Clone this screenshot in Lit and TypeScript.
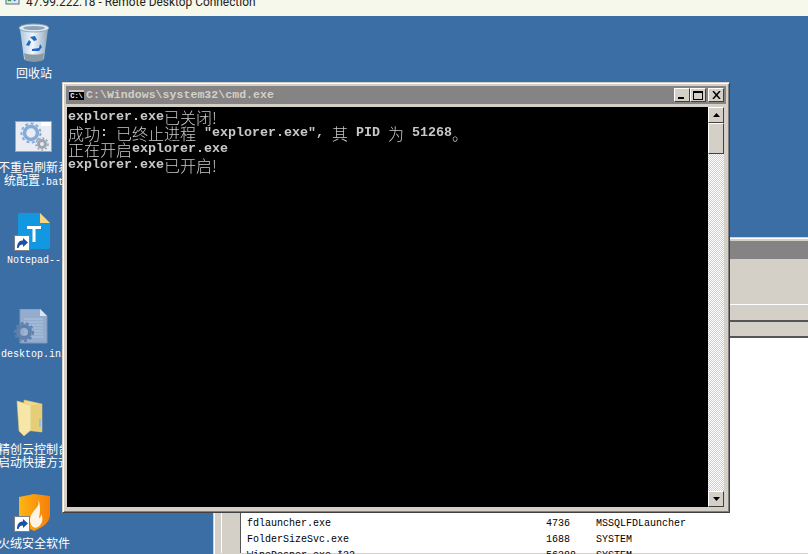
import { LitElement, html, css, svg } from "lit";
import { customElement } from "lit/decorators.js";

const shortcut = html`<svg class="sc" width="16" height="16" viewBox="0 0 16 16">
  <rect x=".5" y=".5" width="15" height="15" fill="#fff" stroke="#7a7f88"/>
  <path d="M3 13c0-5 2-7.500 6-7.500V3l5 4.500-5 4.500V9.500c-2.500 0-4 1-4.500 3.500z" fill="#1c4fa8"/>
</svg>`;

const recycle = svg`<svg width="36" height="42" viewBox="0 0 36 42">
  <defs><linearGradient id="b" x1="0" x2="1"><stop offset="0" stop-color="#a9c6dc"/><stop offset=".45" stop-color="#f1f6fa"/><stop offset="1" stop-color="#8fa9bd"/></linearGradient></defs>
  <path d="M4 7l4 30c2 3 18 3 20 0l4-30z" fill="url(#b)"/>
  <path d="M8 31c5 2 15 2 20 0l-1 7c-3 2-15 2-18 0z" fill="#8c9aa6"/>
  <ellipse cx="18" cy="6" rx="15" ry="4" fill="#dfeaf2" stroke="#8fa6b8"/>
  <ellipse cx="18" cy="6" rx="11" ry="2" fill="#8aa4b8"/>
  <path d="M14 15l5-1 2 4-3 1zM10 23l3-5 2 2-2 4zM16 27l7-1 1-4 2 3-3 4h-7z" fill="#1f66c8"/>
</svg>`;

const gear = svg`<svg width="38" height="32" viewBox="0 0 38 32">
  <rect x=".5" y=".5" width="36" height="30" fill="#e9edf3" stroke="#9aa6b8"/>
  <rect x="26" y="1" width="10" height="4" fill="#ffffff"/>
  <circle cx="16" cy="12" r="6.500" fill="none" stroke="#86abd8" stroke-width="3.500"/>
  <circle cx="16" cy="12" r="9.500" fill="none" stroke="#86abd8" stroke-width="2" stroke-dasharray="3 2.500"/>
  <circle cx="27" cy="23" r="3.500" fill="none" stroke="#9aa6b4" stroke-width="3"/>
  <circle cx="27" cy="23" r="6" fill="none" stroke="#9aa6b4" stroke-width="1.500" stroke-dasharray="2 2"/>
</svg>`;

const note = svg`<svg width="32" height="36" viewBox="0 0 32 36">
  <path d="M2 0h20l10 10v24a2 2 0 0 1-2 2H2a2 2 0 0 1-2-2V2a2 2 0 0 1 2-2z" fill="#1298e0"/>
  <path d="M22 0l10 10H22z" fill="#f8d57e"/>
  <path d="M9 13h14v3h-5.500v13h-3V16H9z" fill="#fff"/>
</svg>`;

const ini = svg`<svg width="34" height="37" viewBox="0 0 34 37">
  <path d="M6 0h20l7 7v27H6z" fill="#94acce" stroke="#7f97ba"/>
  <path d="M26 0l7 7h-7z" fill="#dbe4f0"/>
  <path d="M10 10h19M10 13h19M10 16h19M10 19h19M10 22h19M10 25h19M10 28h19" stroke="#afc3de" stroke-width="1"/>
  <circle cx="10" cy="23" r="6" fill="none" stroke="#5f82ad" stroke-width="4"/>
  <circle cx="10" cy="23" r="9" fill="none" stroke="#5f82ad" stroke-width="2" stroke-dasharray="3 2.500"/>
</svg>`;

const folder = svg`<svg width="28" height="38" viewBox="0 0 28 38">
  <path d="M8 1l18 4v28l-18-2z" fill="#f0db8e" stroke="#d8c071" stroke-width=".6"/>
  <path d="M1 2l14 4v25L8 37l-5-5z" fill="#f6e7a8" stroke="#d9c377" stroke-width=".6"/>
  <path d="M15 6l11-1v28l-11-2z" fill="#e6cd78"/>
  <rect x="23" y="20" width="2" height="8" fill="#9cc0d8"/>
</svg>`;

const shield = svg`<svg width="33" height="37" viewBox="0 0 33 37">
  <defs><linearGradient id="s" x1="0" x2="1"><stop offset="0" stop-color="#fdb515"/><stop offset=".5" stop-color="#fa9a0c"/><stop offset="1" stop-color="#f57f0a"/></linearGradient></defs>
  <path d="M1 3l15-3 16 2v19c0 8-9 13-16 16C9 34 1 29 1 21z" fill="url(#s)"/>
  <path d="M20 5c2 6-1 8-5 13-4 5-4 11 0 15 2 1 3 1 5 0 4-3 6-8 3-13 0 3-1 4-2 4 1-6 2-13-1-19z" fill="#fff3e6"/>
</svg>`;

interface Item { y: number; h: number; dx: number; icon: unknown; lines: string[]; sc?: boolean; }

const items: Item[] = [
  { y: 22, h: 44, dx: 0, icon: recycle, lines: ["回收站"] },
  { y: 121, h: 39, dx: 0, icon: gear, lines: ["不重启刷新系", "统配置.bat"] },
  { y: 213, h: 41, dx: 0, icon: note, lines: ["Notepad--"], sc: true },
  { y: 309, h: 39, dx: -3, icon: ini, lines: ["desktop.ini"] },
  { y: 399, h: 43, dx: -4, icon: folder, lines: ["精创云控制台", "启动快捷方式"] },
  { y: 494, h: 42, dx: 0, icon: shield, lines: ["火绒安全软件"], sc: true },
];

const rows = [
  ["fdlauncher.exe", "4736", "MSSQLFDLauncher"],
  ["FolderSizeSvc.exe", "1688", "SYSTEM"],
  ["WipeDesper.exe *32", "56388", "SYSTEM"],
];

@customElement("app-root")
export class AppRoot extends LitElement {
  static styles = css`
    :host {
      display: block;
      position: relative;
      width: 808px;
      height: 554px;
      overflow: hidden;
      background: #3a6ea5;
      font-family: "Liberation Mono", "Noto Sans CJK SC", monospace;
    }
    .rdp {
      height: 16px;
      background: #f5f8ea;
      display: flex;
      align-items: flex-start;
      gap: 6px;
      padding-left: 5px;
      overflow: hidden;
      color: #222;
      font: 11.9px/14px Roboto, "Liberation Sans", sans-serif;
    }
    .rdp svg { flex: none; margin-top: -5px; }
    .rdp span { white-space: nowrap; margin-top: -5px; }

    .icon { position: absolute; left: -2px; width: 72px; color: #fff; text-align: center; opacity: 0.999; }
    .art { position: relative; display: flex; justify-content: center; }
    .sc { position: absolute; left: 16px; top: 22px; }
    .lbl {
      display: block;
      height: 13px;
      line-height: 13px;
      font-size: 10px;
      white-space: nowrap;
      font-family: "Liberation Mono", "Noto Sans CJK SC", monospace;
    }
    .cjk { font-size: 12px; font-family: "Noto Sans CJK SC", sans-serif; }

    .frame {
      box-sizing: border-box;
      background: #d4d0c8;
      border: 1px solid;
      border-color: #d4d0c8 #404040 #404040 #d4d0c8;
      box-shadow: inset 1px 1px 0 #fff, inset -1px -1px 0 #808080;
      padding: 3px;
      display: flex;
      flex-direction: column;
    }
    .back {
      position: absolute;
      left: 213px;
      top: 237px;
      width: 600px;
      height: 320px;
      overflow: hidden;
    }
    .title { height: 18px; background: #858383; flex: none; }
    .back .panel { height: 45px; background: #d4d0c8; border-bottom: 1px solid #fff; flex: none; }
    .tabbar { height: 15px; flex: none; border-bottom: 2px solid #555; }
    .status { height: 14px; flex: none; border-bottom: 2px solid #555; }
    .body { flex: 1; display: flex; min-height: 0; }
    .gutter { width: 4px; flex: none; border-right: 1px solid #fff; }
    .gutter2 { width: 18px; flex: none; border-right: 1px solid #555; }
    .list {
      flex: 1;
      background: #fff;
      padding: 178px 0 0 6px;
      color: #000;
      font-size: 10px;
      opacity: 0.999;
    }
    .row { display: grid; grid-template-columns: 299px 50px 1fr; height: 16px; line-height: 16px; white-space: nowrap; }

    .cmd {
      position: absolute;
      left: 62px;
      top: 82px;
      width: 668px;
      height: 431px;
    }
    .cmd .title {
      display: flex;
      align-items: center;
      height: 18px;
      padding: 0 2px 0 3px;
      color: #d4d0c8;
      font: bold 11px/18px "Liberation Mono", monospace;
      margin-bottom: 3px;
    }
    .glyph {
      width: 15px;
      height: 10px;
      background: #000;
      color: #fff;
      font: bold 7px/10px "Liberation Mono", monospace;
      border-top: 2px solid #c8c8c8;
      box-sizing: border-box;
      line-height: 8px;
      text-align: center;
      overflow: hidden;
      flex: none;
    }
    .title .path { flex: 1; margin-left: 2px; letter-spacing: 0.06px; font-size: 11.5px; white-space: nowrap; }
    .btn {
      width: 16px;
      height: 14px;
      box-sizing: border-box;
      background: #d4d0c8;
      border: 1px solid;
      border-color: #fff #404040 #404040 #fff;
      display: flex;
      align-items: center;
      justify-content: center;
      flex: none;
    }
    .btn.x { margin-left: 2px; }
    .btn svg { display: block; }
    .con { flex: 1; display: flex; min-height: 0; padding: 0 2px 2px 1px; }
    .term {
      flex: 1;
      background: #000;
      color: #c8c8c8;
      padding: 2px 0 0 1px;
      font: bold 13.33px/16px "Liberation Mono", "Noto Sans CJK SC", monospace;
    }
    .ln { height: 16px; white-space: pre; display: flex; align-items: center; will-change: transform; }
    .term i { font: 300 16px/16px "Noto Sans CJK SC", sans-serif; font-style: normal; }
    .sb {
      width: 16px;
      flex: none;
      display: flex;
      flex-direction: column;
      background-image: conic-gradient(#fff 25%, #d4d0c8 0 50%, #fff 0 75%, #d4d0c8 0);
      background-size: 2px 2px;
    }
    .sb .arrow, .sb .thumb {
      box-sizing: border-box;
      background: #d4d0c8;
      border: 1px solid;
      border-color: #fff #404040 #404040 #fff;
      flex: none;
    }
    .sb .arrow { height: 16px; display: flex; align-items: center; justify-content: center; }
    .sb .thumb { height: 31px; }
    .sb .fill { flex: 1; }
  `;

  render() {
    return html`
      <div class="rdp">
        <svg width="15" height="12" viewBox="0 0 15 12">
          <rect x="1" y="0" width="13" height="9" fill="#dfe6f0" stroke="#5a6b85"/>
          <path d="M3 6l3-3M3 3l3 3" stroke="#2f9a3e" stroke-width="1.500"/>
          <path d="M9 6l3-3" stroke="#2f6fc0" stroke-width="1.500"/>
        </svg>
        <span>47.99.222.18 - Remote Desktop Connection</span>
      </div>

      ${items.map(
        (it) => html`<div class="icon" style="top:${it.y}px">
          <div class="art" style="height:${it.h}px;left:${it.dx}px">${it.icon}${it.sc ? shortcut : ""}</div>
          ${it.lines.map((l) => html`<span class="lbl">${this.label(l)}</span>`)}
        </div>`
      )}

      <div class="back frame">
        <div class="title"></div>
        <div class="panel"></div>
        <div class="tabbar"></div>
        <div class="status"></div>
        <div class="body">
          <div class="gutter"></div>
          <div class="gutter2"></div>
          <div class="list">
            ${rows.map(
              (r) => html`<div class="row"><span>${r[0]}</span><span>${r[1]}</span><span>${r[2]}</span></div>`
            )}
          </div>
        </div>
      </div>

      <div class="cmd frame">
        <div class="title">
          <span class="glyph">C:\\</span>
          <span class="path">C:\\Windows\\system32\\cmd.exe</span>
          <span class="btn"><svg width="8" height="8"><rect x="0" y="6" width="6" height="2" fill="#000"/></svg></span>
          <span class="btn"><svg width="10" height="9"><rect x=".5" y=".5" width="9" height="8" fill="none" stroke="#000"/><rect x="0" y="0" width="10" height="2" fill="#000"/></svg></span>
          <span class="btn x"><svg width="9" height="8"><path d="M1 0l7 8M8 0L1 8" stroke="#000" stroke-width="1.500" fill="none"/></svg></span>
        </div>
        <div class="con">
          <div class="term">
            <div class="ln">explorer.exe<i>已关闭!</i></div>
            <div class="ln"><i>成功</i>: <i>已终止进程</i> "explorer.exe", <i>其</i> PID <i>为</i> 51268<i>。</i></div>
            <div class="ln"><i>正在开启</i>explorer.exe</div>
            <div class="ln">explorer.exe<i>已开启!</i></div>
          </div>
          <div class="sb">
            <div class="arrow"><svg width="7" height="4"><path d="M3.500 0L7 4H0z" fill="#000"/></svg></div>
            <div class="thumb"></div>
            <div class="fill"></div>
            <div class="arrow"><svg width="7" height="4"><path d="M0 0h7L3.500 4z" fill="#000"/></svg></div>
          </div>
        </div>
      </div>
    `;
  }

  private label(l: string) {
    if (l.endsWith(".bat")) return html`<span class="cjk">统配置</span>.bat`;
    return /[\u4e00-\u9fff]/.test(l) ? html`<span class="cjk">${l}</span>` : l;
  }
}
